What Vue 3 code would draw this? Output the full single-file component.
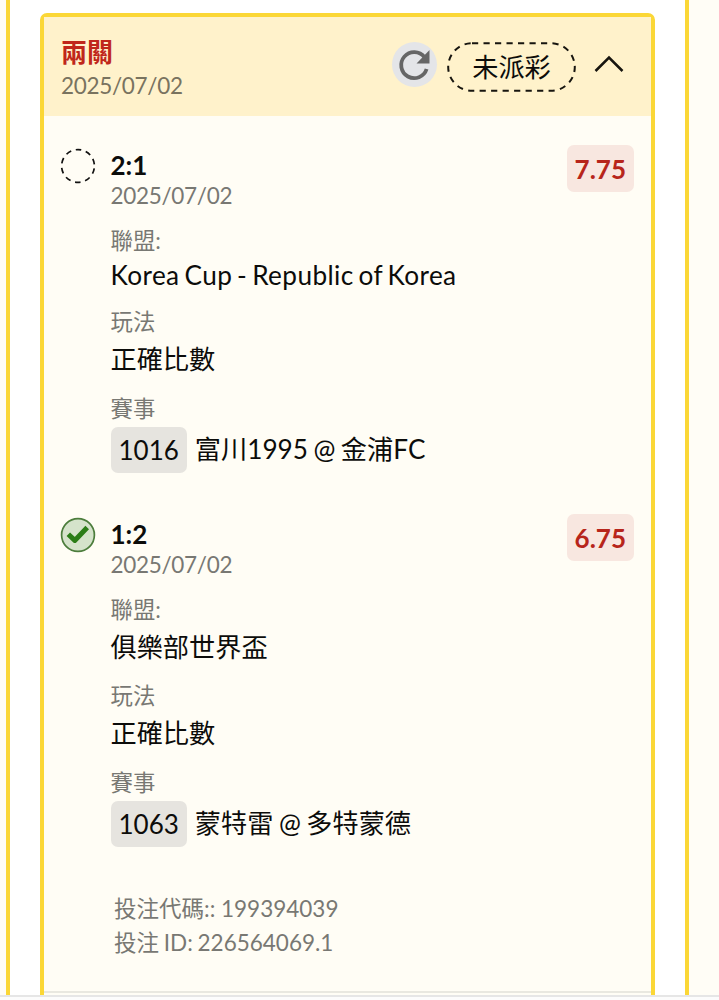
<template>
  <div class="page">
    <div class="panel">
      <section class="bet-card">
        <header class="bet-header">
          <div class="bet-title">
            <h1 class="bet-name">兩關</h1>
            <p class="bet-date">2025/07/02</p>
          </div>
          <button class="btn-refresh" aria-label="重新整理">
            <svg class="refresh-icon" viewBox="0 0 45 45" fill="none" aria-hidden="true">
              <path d="M32.5 15.2A13 13 0 1 0 34.6 27" stroke="currentColor" stroke-width="3.8" />
              <path d="M37.5 8V21.5H24.5Z" fill="currentColor" />
            </svg>
          </button>
          <span class="status-pill">
            <svg class="pill-outline" viewBox="0 0 129 50" fill="none" aria-hidden="true">
              <rect x="1.2" y="1.2" width="126.6" height="47.6" rx="23.8" />
            </svg>
            <span class="pill-text">未派彩</span>
          </span>
          <button class="btn-toggle" :aria-expanded="isExpanded" aria-label="詳情" @click="alternar">
            <svg class="chevron-icon" :class="{ closed: !isExpanded }" viewBox="0 0 30 18" fill="none" aria-hidden="true">
              <polyline points="1.5 16 15 2.5 28.5 16" />
            </svg>
          </button>
        </header>

        <div v-show="isExpanded" class="bet-body">
          <article v-for="leg in legs" :key="leg.code" class="leg">
            <svg v-if="leg.won" class="leg-icon" viewBox="0 0 36 36" fill="none" aria-hidden="true">
              <circle cx="18" cy="18" r="16.4" fill="#d5e3cb" stroke="#4c7d3c" stroke-width="1.7" />
              <path d="M8.3 17.2L14.8 23.4L27.2 10.6" stroke="#2b7d17" stroke-width="5" stroke-linejoin="round" />
            </svg>
            <svg v-else class="leg-icon" viewBox="0 0 36 36" fill="none" aria-hidden="true">
              <circle cx="18" cy="18" r="16.4" stroke="#111" stroke-width="1.7" stroke-dasharray="5.6 4.7" stroke-dashoffset="-2.4" />
            </svg>

            <div class="leg-content">
              <h2 class="leg-score">{{ leg.score }}</h2>
              <p class="leg-date">{{ leg.date }}</p>
              <div class="field">
                <span class="label">聯盟:</span>
                <span class="value" :class="{ latin: leg.latin }">{{ leg.league }}</span>
              </div>
              <div class="field">
                <span class="label">玩法</span>
                <span class="value">正確比數</span>
              </div>
              <div class="field">
                <span class="label">賽事</span>
                <div class="match">
                  <span class="match-code">{{ leg.code }}</span>
                  <span class="match-name">{{ leg.match }}</span>
                </div>
              </div>
            </div>

            <span class="odds">{{ leg.odds }}</span>
          </article>

          <footer class="bet-footer">
            <p>投注代碼:: 199394039</p>
            <p>投注 ID: 226564069.1</p>
          </footer>
        </div>
      </section>
    </div>
  </div>
</template>

<script setup>
import { ref } from 'vue';

const isExpanded = ref(true);

const legs = ref([
  {
    score: '2:1',
    date: '2025/07/02',
    league: 'Korea Cup - Republic of Korea',
    latin: true,
    code: '1016',
    match: '富川1995 @ 金浦FC',
    odds: '7.75',
    won: false
  },
  {
    score: '1:2',
    date: '2025/07/02',
    league: '俱樂部世界盃',
    latin: false,
    code: '1063',
    match: '蒙特雷 @ 多特蒙德',
    odds: '6.75',
    won: true
  }
]);

const alternar = () => {
  isExpanded.value = !isExpanded.value;
};
</script>

<style>
body {
  margin: 0;
  background: #fcfcfc;
}
</style>

<style scoped>
.page {
  box-sizing: border-box;
  width: 719px;
  height: 997px;
  padding: 0 30px 0 6px;
  border-bottom: 2px solid #e6e6e6;
  background: #fffdf6;
  overflow: hidden;
  font-family: Lato, "Noto Sans CJK TC", sans-serif;
  color: #0c0c0a;
}

h1,
h2,
p {
  margin: 0;
}

button {
  padding: 0;
  border: none;
  background: none;
  cursor: pointer;
}

.panel {
  box-sizing: border-box;
  height: 995px;
  padding: 13px 30px 0;
  border: solid #fbd736;
  border-width: 0 4px;
  background: #ffffff;
}

.bet-card {
  box-sizing: border-box;
  height: 1000px;
  border: 4px solid #fbd736;
  border-radius: 7px;
  background: #fffdf5;
}

/* Cabeçalho */
.bet-header {
  box-sizing: border-box;
  display: flex;
  align-items: flex-start;
  height: 99px;
  padding: 19px 27px 0 17px;
  background: #fff2cb;
}

.bet-title {
  flex: 1;
}

.bet-name {
  font-size: 26px;
  line-height: 33px;
  font-weight: 700;
  color: #c0271b;
}

.bet-date {
  font-size: 22.5px;
  line-height: 33px;
  letter-spacing: -0.3px;
  color: #79735f;
}

.btn-refresh {
  display: flex;
  width: 45px;
  height: 45px;
  margin: 6px 10px 0 0;
  border-radius: 50%;
  background: #e4e5e8;
  color: #666666;
}

.refresh-icon {
  width: 45px;
  height: 45px;
}

.status-pill {
  display: grid;
  width: 129px;
  height: 50px;
  margin: 6px 18px 0 0;
  place-items: center;
}

.pill-outline,
.pill-text {
  grid-area: 1 / 1;
}

.pill-outline {
  width: 129px;
  height: 50px;
  stroke: #17150f;
  stroke-width: 2;
  stroke-dasharray: 6.2 5.3;
}

.pill-text {
  font-size: 26.2px;
  line-height: 36px;
}

.btn-toggle {
  display: flex;
  margin-top: 19px;
  color: #17150f;
}

.chevron-icon {
  width: 30px;
  height: 18px;
  stroke: currentColor;
  stroke-width: 2.5;
}

.chevron-icon.closed {
  transform: rotate(180deg);
}

/* Apostas */
.bet-body {
  height: 877px;
  padding-top: 29px;
  border-bottom: 2px solid #e9e8e0;
  box-sizing: border-box;
}

.leg {
  display: flex;
  align-items: flex-start;
  padding: 0 17px 0 16px;
  margin-bottom: 41px;
}

.leg-icon {
  flex-shrink: 0;
  width: 36px;
  height: 36px;
  margin: 3px 14.5px 0 0;
}

.leg-content {
  flex: 1;
  padding-top: 3px;
}

.leg-score {
  font-size: 26px;
  line-height: 34px;
  font-weight: 700;
}

.leg-date {
  margin-bottom: 16px;
  font-size: 22.5px;
  line-height: 27px;
  letter-spacing: -0.3px;
  color: #787873;
}

.field {
  margin-bottom: 14.4px;
}

.field:last-child {
  margin-bottom: 0;
}

.label,
.value {
  display: block;
}

.label {
  margin-bottom: 2px;
  font-size: 22.4px;
  line-height: 32px;
  color: #787873;
}

.value {
  font-size: 26.2px;
  line-height: 38px;
}

.value.latin {
  line-height: 33px;
  letter-spacing: 0.4px;
  word-spacing: -2.2px;
}

.match {
  display: flex;
  align-items: center;
  gap: 8px;
}

.match-code {
  padding: 0 8px;
  border-radius: 7px;
  background: #e6e4df;
  font-size: 26px;
  line-height: 46px;
}

.match-name {
  padding-bottom: 1px;
  font-size: 26.2px;
  line-height: 38px;
  word-spacing: -1.2px;
  white-space: nowrap;
}

.odds {
  padding: 1px 8px 0;
  border-radius: 7px;
  background: #f8e7e0;
  font-size: 26px;
  line-height: 46px;
  font-weight: 700;
  color: #b7251b;
}

.bet-footer {
  padding: 4px 0 0 70px;
  font-size: 22.5px;
  line-height: 34px;
  color: #787873;
}

.bet-footer p:last-child {
  word-spacing: -1px;
}
</style>
